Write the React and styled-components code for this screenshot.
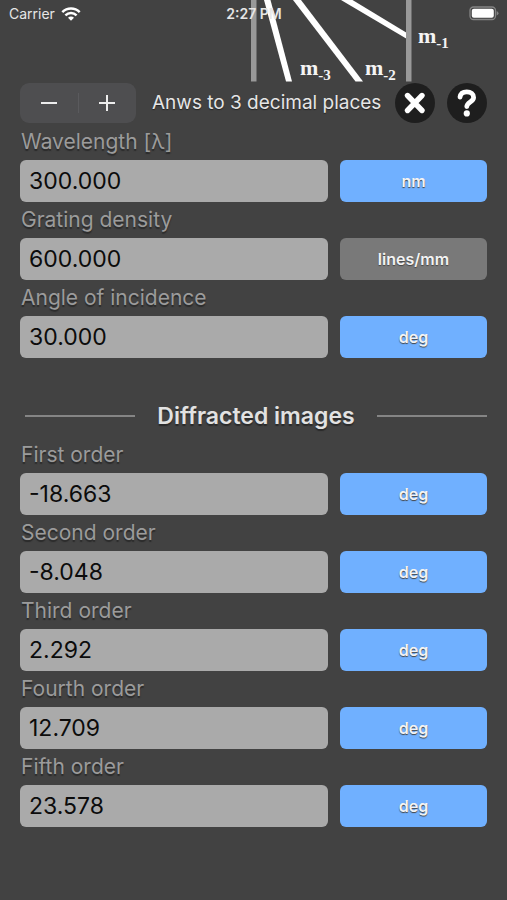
import React, { useState } from "react";
import styled, { createGlobalStyle } from "styled-components";

const GlobalStyle = createGlobalStyle`
  *, *::before, *::after { box-sizing: border-box; }
  body {
    margin: 0;
    background: #424242;
    color: #e6e6e6;
    font-family: Inter, "Liberation Sans", sans-serif;
  }
  button, input { font-family: inherit; }
`;

const Screen = styled.main`
  min-height: 100vh;
  background: #424242;
`;

const Hero = styled.header`
  position: relative;
  height: 82px;
`;

const Diagram = styled.svg`
  position: absolute;
  inset: 0;
  width: 100%;
  height: 100%;
`;

const OrderLabel = styled.text`
  fill: #f4f4f4;
  font: bold 22px "Liberation Serif", serif;
`;

const OrderIndex = styled.tspan`
  font-size: 15px;
`;

const StatusBar = styled.div`
  position: relative;
  display: grid;
  grid-template-columns: 1fr auto 1fr;
  align-items: center;
  height: 27px;
  padding: 0 8px 0 9px;
  font-size: 14px;
  line-height: 20px;
`;

const Carrier = styled.div`
  display: flex;
  align-items: center;
  gap: 6px;
`;

const Clock = styled.time`
  font-weight: 600;
`;

const Battery = styled.svg`
  justify-self: end;
`;

const Toolbar = styled.div`
  display: flex;
  align-items: center;
  height: 42px;
  padding: 0 20px;
`;

const Stepper = styled.div`
  display: flex;
  align-items: center;
  width: 116px;
  height: 40px;
  border-radius: 9px;
  background: #4e4e50;
`;

const StepButton = styled.button`
  flex: 1;
  display: grid;
  place-items: center;
  height: 100%;
  padding: 0;
  border: 0;
  background: none;
  color: #ededed;
`;

const StepDivider = styled.span`
  width: 1px;
  height: 20px;
  background: #5a5a5d;
`;

const Precision = styled.output`
  flex: 1;
  padding-left: 16px;
  font-size: 19px;
  line-height: 28px;
  white-space: nowrap;
  text-shadow: 0 1px 1px #222;
`;

const RoundActions = styled.div`
  display: flex;
  gap: 12px;
`;

const RoundButton = styled.button`
  display: grid;
  place-items: center;
  width: 40px;
  height: 40px;
  padding: 0;
  border: 0;
  border-radius: 50%;
  background: #1e1e1e;
  color: #fff;
`;

const Fields = styled.section`
  padding: 0 20px;
`;

const Field = styled.div`
  display: grid;
  grid-template-columns: 308fr 147fr;
  grid-template-rows: 36px 42px;
  column-gap: 12px;
`;

const FieldLabel = styled.label`
  grid-column: 1 / -1;
  padding-left: 1px;
  color: #9b9b9b;
  font-size: 21px;
  line-height: 36px;
  text-shadow: 0 2px 1px #2a2a2a;
`;

const ValueInput = styled.input`
  width: 100%;
  min-width: 0;
  height: 42px;
  padding: 0 9px;
  border: 0;
  border-radius: 6px;
  background: #aaa;
  color: #0c0c0c;
  font-size: 23px;
`;

const UnitButton = styled.button`
  height: 42px;
  padding: 0;
  border: 0;
  border-radius: 6px;
  background: ${({ $fixed }) => ($fixed ? "#797979" : "#70b0ff")};
  color: #f3f3f3;
  font-size: 16px;
  font-weight: 600;
  text-shadow: 0 1px 1px #444;
`;

const SectionHeading = styled.div`
  display: flex;
  align-items: center;
  gap: 22px;
  height: 79px;
  padding: 36px 20px 0 25px;
`;

const Rule = styled.span`
  flex: 1;
  height: 2px;
  background: #858585;
`;

const Title = styled.h2`
  margin: 0;
  color: #e2e2e2;
  font-size: 23px;
  font-weight: 600;
  line-height: 32px;
  text-shadow: 0 2px 1px #2a2a2a;
`;

const inputs = [
  { id: "wavelength", label: "Wavelength [λ]", value: "300.000", unit: "nm" },
  { id: "density", label: "Grating density", value: "600.000", unit: "lines/mm", fixed: true },
  { id: "incidence", label: "Angle of incidence", value: "30.000", unit: "deg" },
];

const orders = [
  { id: "first", label: "First order", value: "-18.663", unit: "deg" },
  { id: "second", label: "Second order", value: "-8.048", unit: "deg" },
  { id: "third", label: "Third order", value: "2.292", unit: "deg" },
  { id: "fourth", label: "Fourth order", value: "12.709", unit: "deg" },
  { id: "fifth", label: "Fifth order", value: "23.578", unit: "deg" },
];

function ValueField({ id, label, value, unit, fixed }) {
  return (
    <Field>
      <FieldLabel htmlFor={id}>{label}</FieldLabel>
      <ValueInput id={id} defaultValue={value} inputMode="decimal" />
      <UnitButton type="button" $fixed={fixed}>{unit}</UnitButton>
    </Field>
  );
}

function GratingDiagram() {
  return (
    <Diagram viewBox="0 0 507 82" preserveAspectRatio="xMidYMin meet" aria-hidden="true">
      <path d="M251 0h5.5v81.5H251z" fill="#999" />
      <path d="M264 0h6.5l21.5 81.5h-6z" fill="#fff" />
      <path d="M293 0h8l62 81.5h-7.5z" fill="#fff" />
      <path d="M341 0h11.5L407 33v6z" fill="#fff" />
      <path d="M406 0h5.5v81.5H406z" fill="#999" />
      <OrderLabel x="418" y="43">m<OrderIndex dy="5">-1</OrderIndex></OrderLabel>
      <OrderLabel x="300" y="75">m<OrderIndex dy="5">-3</OrderIndex></OrderLabel>
      <OrderLabel x="365" y="75">m<OrderIndex dy="5">-2</OrderIndex></OrderLabel>
    </Diagram>
  );
}

function WifiIcon() {
  return (
    <svg width="20" height="14" viewBox="0 0 20 14" fill="none" stroke="#fff" strokeWidth="2.5" aria-label="Wi-Fi">
      <path d="M1.3 5.2C6.2.4 13.8.4 18.7 5.2" />
      <path d="M4.4 8.3c3.2-3 8-3 11.2 0" />
      <path d="M7 10.7c1.8-1.5 4.2-1.5 6 0l-3 3z" fill="#fff" stroke="none" />
    </svg>
  );
}

export default function App() {
  const [places, setPlaces] = useState(3);
  return (
    <Screen>
      <GlobalStyle />
      <Hero>
        <GratingDiagram />
        <StatusBar>
          <Carrier>Carrier <WifiIcon /></Carrier>
          <Clock>2:27 PM</Clock>
          <Battery width="30" height="15" viewBox="0 0 30 15" aria-label="Battery full">
            <rect x="1" y="1" width="25.5" height="12.5" rx="3.5" fill="none" stroke="#858585" strokeWidth="1.3" />
            <rect x="2.8" y="2.8" width="22" height="9" rx="2" fill="#fff" />
            <path d="M27.7 5v4.5q1.8-.6 1.8-2.2T27.7 5" fill="#858585" />
          </Battery>
        </StatusBar>
      </Hero>
      <Toolbar>
        <Stepper>
          <StepButton type="button" aria-label="Fewer decimal places" onClick={() => setPlaces(Math.max(0, places - 1))}>
            <svg width="18" height="18" viewBox="0 0 18 18" stroke="currentColor" strokeWidth="2"><path d="M1 9h16" /></svg>
          </StepButton>
          <StepDivider />
          <StepButton type="button" aria-label="More decimal places" onClick={() => setPlaces(places + 1)}>
            <svg width="18" height="18" viewBox="0 0 18 18" stroke="currentColor" strokeWidth="2"><path d="M1 9h16M9 1v16" /></svg>
          </StepButton>
        </Stepper>
        <Precision>{`Anws to ${places} decimal places`}</Precision>
        <RoundActions>
          <RoundButton type="button" aria-label="Clear">
            <svg width="40" height="40" viewBox="0 0 40 40" fill="none" stroke="currentColor" strokeWidth="5.4" strokeLinecap="round">
              <path d="M12.5 12.5l14.5 15M27 12.5l-14.5 15" />
            </svg>
          </RoundButton>
          <RoundButton type="button" aria-label="Help">
            <svg width="40" height="40" viewBox="0 0 40 40" fill="none" stroke="currentColor" strokeWidth="4.8" strokeLinecap="round" strokeLinejoin="round">
              <path d="M13 14.2c.5-3.6 3.2-5.3 6.8-5.3 4 0 6.8 2.1 6.8 5.5 0 4.6-6.8 4.4-6.8 9.2" />
              <circle cx="19.8" cy="30.4" r="3.1" fill="currentColor" stroke="none" />
            </svg>
          </RoundButton>
        </RoundActions>
      </Toolbar>
      <Fields aria-label="Inputs">
        {inputs.map((field) => <ValueField key={field.id} {...field} />)}
      </Fields>
      <SectionHeading>
        <Rule />
        <Title>Diffracted images</Title>
        <Rule />
      </SectionHeading>
      <Fields aria-label="Diffracted images">
        {orders.map((field) => <ValueField key={field.id} {...field} />)}
      </Fields>
    </Screen>
  );
}
